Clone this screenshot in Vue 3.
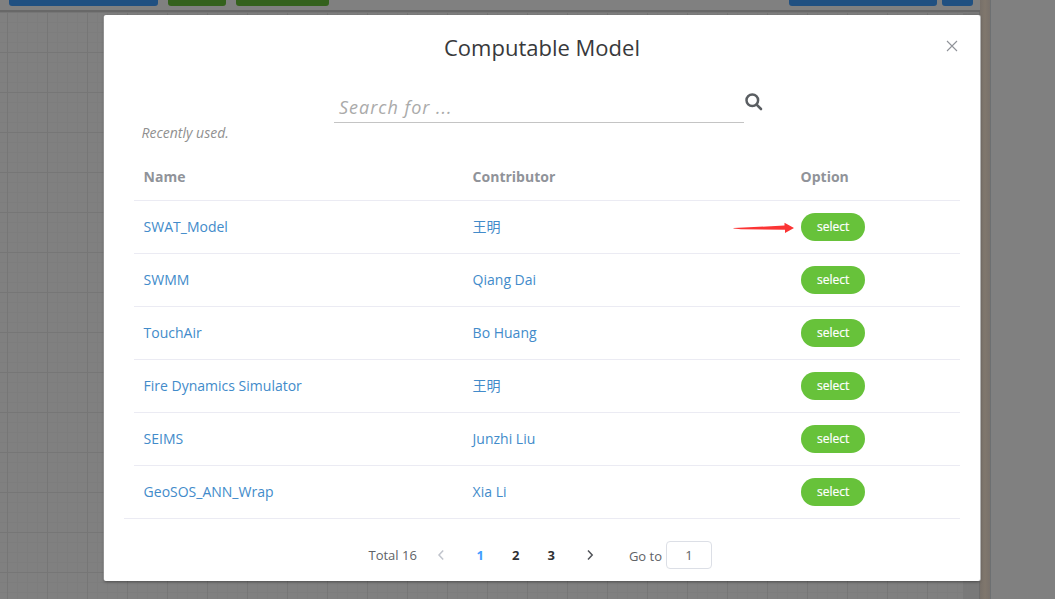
<script setup>
const models = [
  { name: 'SWAT_Model', contributor: '王明', marked: true },
  { name: 'SWMM', contributor: 'Qiang Dai' },
  { name: 'TouchAir', contributor: 'Bo Huang' },
  { name: 'Fire Dynamics Simulator', contributor: '王明' },
  { name: 'SEIMS', contributor: 'Junzhi Liu' },
  { name: 'GeoSOS_ANN_Wrap', contributor: 'Xia Li' },
]
const pages = [1, 2, 3]
</script>

<template>
  <div class="page">
    <div class="workspace">
      <div class="toolbar">
        <span class="tool blue w149"></span>
        <span class="tool green w58"></span>
        <span class="tool green w93"></span>
        <span class="tool blue w148 right"></span>
        <span class="tool blue w31"></span>
      </div>
      <div class="canvas">
        <div class="grid"></div>
        <div class="strip"></div>
        <div class="scroll"></div>
      </div>
    </div>
    <div class="divider"></div>
    <div class="side"></div>

    <div class="dialog">
      <header class="head">
        <h1>Computable Model</h1>
        <svg class="close" width="12" height="12" viewBox="0 0 12 12">
          <path d="M1 1L11 11M11 1L1 11" fill="none" stroke="#909399" stroke-width="1.1" />
        </svg>
      </header>
      <div class="search">
        <div class="field">Search for ...</div>
        <svg class="glass" width="18" height="18" viewBox="0 0 18 18">
          <circle cx="7.3" cy="7.3" r="5.8" fill="none" stroke="#5a5e62" stroke-width="2.5" />
          <path d="M11.6 11.6L16 16" stroke="#5a5e62" stroke-width="2.6" stroke-linecap="round" />
        </svg>
      </div>
      <div class="recent">Recently used.</div>
      <div class="table">
        <div class="row header">
          <span>Name</span><span>Contributor</span><span>Option</span>
        </div>
        <div v-for="m in models" :key="m.name" class="row">
          <a>{{ m.name }}</a>
          <a>{{ m.contributor }}</a>
          <div class="option">
            <button>select</button>
            <svg v-if="m.marked" class="arrow" width="62" height="12" viewBox="0 0 62 12">
              <path d="M0.5 6.1L51.5 3.6V0.8L61 6L52 11V7.8L8 7.2L0.5 6.6Z" fill="#fb3434" />
            </svg>
          </div>
        </div>
      </div>
      <footer class="pager">
        <span class="total">Total 16</span>
        <svg class="chev prev" width="8" height="10" viewBox="0 0 8 10">
          <path d="M6.2 0.6L2 5L6.2 9.4" fill="none" stroke="#c0c4cc" stroke-width="1.5" />
        </svg>
        <span v-for="p in pages" :key="p" class="num" :class="{ active: p === 1 }">{{ p }}</span>
        <svg class="chev next" width="8" height="10" viewBox="0 0 8 10">
          <path d="M2 0.6L6.2 5L2 9.4" fill="none" stroke="#505358" stroke-width="1.5" />
        </svg>
        <span class="goto">Go to</span>
        <span class="box">1</span>
      </footer>
    </div>
  </div>
</template>

<style>
body { margin: 0; overflow: hidden; }
</style>

<style scoped>
.page {
  position: relative;
  display: flex;
  width: 1055px;
  height: 599px;
  overflow: hidden;
  background: #808080;
  font-family: "Open Sans", "Noto Sans CJK SC", sans-serif;
}
.workspace { width: 980px; display: flex; flex-direction: column; }
.toolbar {
  box-sizing: border-box;
  height: 12px;
  padding: 0 7px 0 9px;
  display: flex;
  align-items: flex-start;
  border-bottom: 2px solid #686868;
}
.tool { height: 6px; margin-right: 10px; border-radius: 0 0 3px 3px; }
.blue { background: #205081; }
.green { background: #34611d; }
.w149 { width: 149px; }
.w58 { width: 58px; }
.w93 { width: 93px; }
.w148 { width: 148px; margin-right: 5px; }
.w31 { width: 31px; margin-right: 0; }
.right { margin-left: auto; }
.canvas { flex: 1; display: flex; }
.grid {
  width: 963px;
  background-color: #808080;
  background-image:
    linear-gradient(90deg, #767676 1px, transparent 1px),
    linear-gradient(#767676 1px, transparent 1px),
    linear-gradient(90deg, #7d7d7d 1px, transparent 1px),
    linear-gradient(#7d7d7d 1px, transparent 1px);
  background-size: 40px 40px, 40px 40px, 10px 10px, 10px 10px;
  background-position: 7px 0, 0 0, 7px 0, 0 0;
}
.strip { width: 16px; background: #797979; }
.scroll { width: 1px; background: #6c6c6c; }
.divider {
  box-sizing: border-box;
  width: 11px;
  background: linear-gradient(90deg, #777069, #80776d 50%, #78716b);
  border-right: 1px solid #6d7072;
}
.side { flex: 1; background: #808080; }
.dialog {
  position: absolute;
  left: 104px;
  top: 15px;
  width: 876px;
  height: 566px;
  box-sizing: border-box;
  padding: 0 20px;
  background: #fff;
  border-radius: 2px;
  box-shadow: -1px 0 0 -0.5px #b4b4b4, 1px 0 0 #b4b4b4, 0 1px 3px rgba(0, 0, 0, 0.4);
}
.head { position: relative; height: 78px; }
h1 {
  margin: 0;
  padding-top: 17px;
  font-size: 22px;
  line-height: 30px;
  font-weight: 400;
  text-align: center;
  color: #38393b;
}
.close { position: absolute; right: 2px; top: 25px; }
.search { display: flex; align-items: flex-end; height: 30px; padding-left: 210px; }
.field {
  box-sizing: border-box;
  width: 410px;
  height: 30px;
  padding: 0 5px;
  border-bottom: 1px solid #c4c4c4;
  font-size: 18px;
  line-height: 28px;
  font-style: italic;
  letter-spacing: 1px;
  color: #aaa;
}
.glass { margin: 0 0 12px 1px; }
.recent {
  height: 44px;
  padding-left: 17.5px;
  font-size: 14px;
  line-height: 20px;
  font-style: italic;
  color: #909090;
}
.table { border-bottom: 1px solid #ebebf3; }
.row {
  box-sizing: border-box;
  display: grid;
  grid-template-columns: 329px 328px 1fr;
  align-items: center;
  height: 53px;
  margin-left: 10px;
  padding-left: 9.6px;
  border-bottom: 1px solid #ebebf3;
  font-size: 14px;
  line-height: 20px;
}
.row:last-child { height: 52px; border-bottom: 0; }
.row.header { height: 34px; padding-bottom: 13px; color: #909399; font-weight: 700; }
a { color: #428bca; }
.option { position: relative; display: flex; }
button {
  width: 64px;
  height: 28px;
  padding: 0 0 1px 1px;
  border: 0;
  border-radius: 14px;
  background: #67c23a;
  color: #fff;
  font: 500 12px "Open Sans", sans-serif;
  -webkit-text-stroke: 0.2px #fff;
}
.arrow { position: absolute; left: -68px; top: 9px; }
.pager {
  display: flex;
  align-items: center;
  height: 52px;
  padding-top: 10px;
  padding-left: 244.5px;
  font-size: 13px;
  line-height: 18px;
  color: #606266;
}
.chev { flex: none; }
.prev { margin-left: 20.5px; margin-right: 17px; }
.num { width: 35.5px; text-align: center; font-weight: 700; color: #303133; }
.active { color: #409eff; }
.next { margin-left: 17.5px; }
.goto { margin-left: 34.5px; padding-top: 2px; }
.box {
  box-sizing: border-box;
  width: 46px;
  height: 28px;
  margin-left: 4px;
  border: 1px solid #dcdfe6;
  border-radius: 4px;
  line-height: 26px;
  text-align: center;
}
</style>
